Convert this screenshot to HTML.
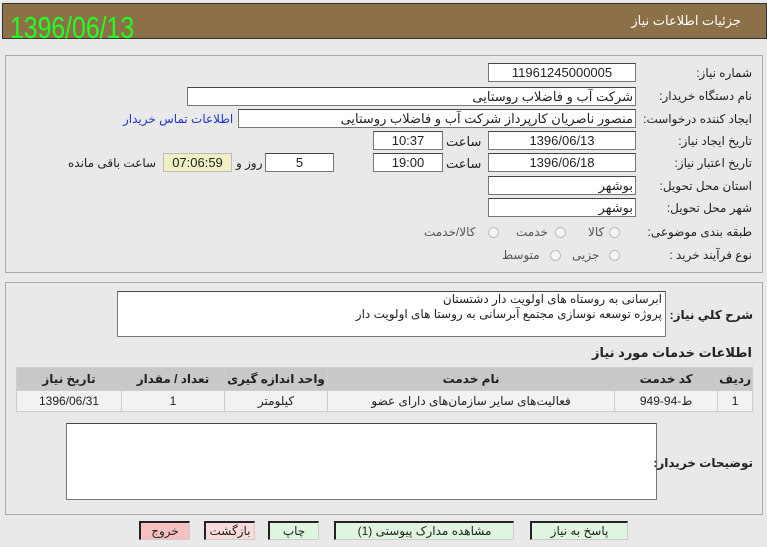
<!DOCTYPE html>
<html><head><meta charset="utf-8"><style>
body{margin:0;width:767px;height:547px;background:#e9e9e9;font-family:"Liberation Sans","DejaVu Sans",sans-serif;font-size:12px;color:#222;position:relative;overflow:hidden;direction:rtl}
.a{position:absolute}
.hd{left:2px;top:3px;width:763px;height:34px;background:#8b7048;border:1px solid #333}
.pn{border:1px solid #aaa;background:#e9e9e9}
.bx{position:absolute;background:#fff;border:1px solid #777;border-top-color:#444;box-sizing:border-box;font-size:13px;line-height:17px;text-align:center}
.lb{position:absolute;font-size:12px;white-space:nowrap}
.r{text-align:right;padding-right:2px}
table{border-collapse:collapse}
td{border:1px solid #ccc;text-align:center;font-size:12px}
.btn{position:absolute;top:521px;height:19px;box-sizing:border-box;border:1px solid #555;border-right-color:#ccc;border-bottom-color:#ccc;border-left:2px solid #222;border-top:2px solid #222;background:#dff5df;text-align:center;line-height:16px;font-size:12px}
.rd{position:absolute;width:9px;height:9px;border:1px solid #bbb;border-radius:50%;background:#f4f4f4}
.g{color:#555}
</style></head><body>
<div class="a hd"></div>
<div class="lb" style="right:26px;top:13px;color:#fff;font-size:13px">جزئیات اطلاعات نیاز</div>
<div class="lb" style="left:10px;top:10px;color:#22ff22;font-size:31px;direction:ltr;transform:scaleX(0.8);transform-origin:left top">1396/06/13</div>

<div class="a pn" style="left:5px;top:55px;width:756px;height:216px"></div>
<div class="lb" style="right:15px;top:66px">شماره نیاز:</div>
<div class="bx" style="left:488px;top:63px;width:148px;height:19px">11961245000005</div>
<div class="lb" style="right:15px;top:89px">نام دستگاه خریدار:</div>
<div class="bx r" style="left:187px;top:87px;width:449px;height:19px">شرکت آب و فاضلاب روستایی</div>
<div class="lb" style="right:15px;top:112px">ایجاد کننده درخواست:</div>
<div class="bx r" style="left:238px;top:109px;width:398px;height:19px">منصور ناصریان کارپرداز شرکت آب و فاضلاب روستایی</div>
<div class="lb" style="left:123px;top:112px;color:#2233cc">اطلاعات تماس خریدار</div>
<div class="lb" style="right:15px;top:134px">تاریخ ایجاد نیاز:</div>
<div class="bx" style="left:488px;top:131px;width:148px;height:19px">1396/06/13</div>
<div class="lb" style="left:446px;top:134px;font-size:13px">ساعت</div>
<div class="bx" style="left:373px;top:131px;width:70px;height:19px">10:37</div>
<div class="lb" style="right:15px;top:156px">تاریخ اعتبار نیاز:</div>
<div class="bx" style="left:488px;top:153px;width:148px;height:19px">1396/06/18</div>
<div class="lb" style="left:446px;top:156px;font-size:13px">ساعت</div>
<div class="bx" style="left:373px;top:153px;width:70px;height:19px">19:00</div>
<div class="bx" style="left:265px;top:153px;width:69px;height:19px">5</div>
<div class="lb" style="left:236px;top:156px">روز و</div>
<div class="bx" style="left:163px;top:153px;width:69px;height:19px;background:#f0f0c4;border-color:#bbb">07:06:59</div>
<div class="lb" style="left:68px;top:156px">ساعت باقی مانده</div>
<div class="lb" style="right:15px;top:179px">استان محل تحویل:</div>
<div class="bx r" style="left:488px;top:176px;width:148px;height:19px">بوشهر</div>
<div class="lb" style="right:15px;top:201px">شهر محل تحویل:</div>
<div class="bx r" style="left:488px;top:198px;width:148px;height:19px">بوشهر</div>
<div class="lb" style="right:15px;top:225px">طبقه بندی موضوعی:</div>
<span class="rd" style="left:609px;top:227px"></span><div class="lb g" style="left:588px;top:225px">کالا</div>
<span class="rd" style="left:555px;top:227px"></span><div class="lb g" style="left:516px;top:225px">خدمت</div>
<span class="rd" style="left:488px;top:227px"></span><div class="lb g" style="left:424px;top:225px">کالا/خدمت</div>
<div class="lb" style="right:15px;top:248px">نوع فرآیند خرید :</div>
<span class="rd" style="left:609px;top:250px"></span><div class="lb g" style="left:572px;top:248px">جزیی</div>
<span class="rd" style="left:550px;top:250px"></span><div class="lb g" style="left:502px;top:248px">متوسط</div>

<div class="a pn" style="left:5px;top:282px;width:756px;height:231px"></div>
<div class="bx" style="left:117px;top:291px;width:549px;height:46px;text-align:right;padding-right:3px;font-size:12px;line-height:15px">ابرسانی به روستاه های اولویت دار دشتستان<br>پروژه توسعه نوسازی مجتمع آبرسانی به روستا های اولویت دار</div>
<div class="lb" style="right:14px;top:308px;font-weight:bold;font-size:12px">شرح کلي نياز:</div>
<div class="lb" style="right:15px;top:345px;font-weight:bold;font-size:13px">اطلاعات خدمات مورد نیاز</div>
<table class="a" style="left:16px;top:367px;width:737px">
<tr style="background:#c8c8c8;height:23px;font-weight:bold"><td style="width:28px">ردیف</td><td style="width:100px">کد خدمت</td><td>نام خدمت</td><td style="width:100px">واحد اندازه گیری</td><td style="width:100px">تعداد / مقدار</td><td style="width:102px">تاریخ نیاز</td></tr>
<tr style="background:#f2f2f2;height:21px"><td>1</td><td>ط-94-949</td><td>فعالیت‌های سایر سازمان‌های دارای عضو</td><td>کیلومتر</td><td>1</td><td>1396/06/31</td></tr>
</table>
<div class="bx" style="left:66px;top:423px;width:591px;height:77px"></div>
<div class="lb" style="right:14px;top:456px;font-weight:bold;font-size:12px">توضیحات خریدار:</div>

<div class="btn" style="left:530px;width:98px">پاسخ به نیاز</div>
<div class="btn" style="left:334px;width:180px">مشاهده مدارک پیوستی (1)</div>
<div class="btn" style="left:268px;width:51px">چاپ</div>
<div class="btn" style="left:204px;width:51px;background:#fadada">بازگشت</div>
<div class="btn" style="left:139px;width:51px;background:#f7c0c0">خروج</div>
</body></html>
